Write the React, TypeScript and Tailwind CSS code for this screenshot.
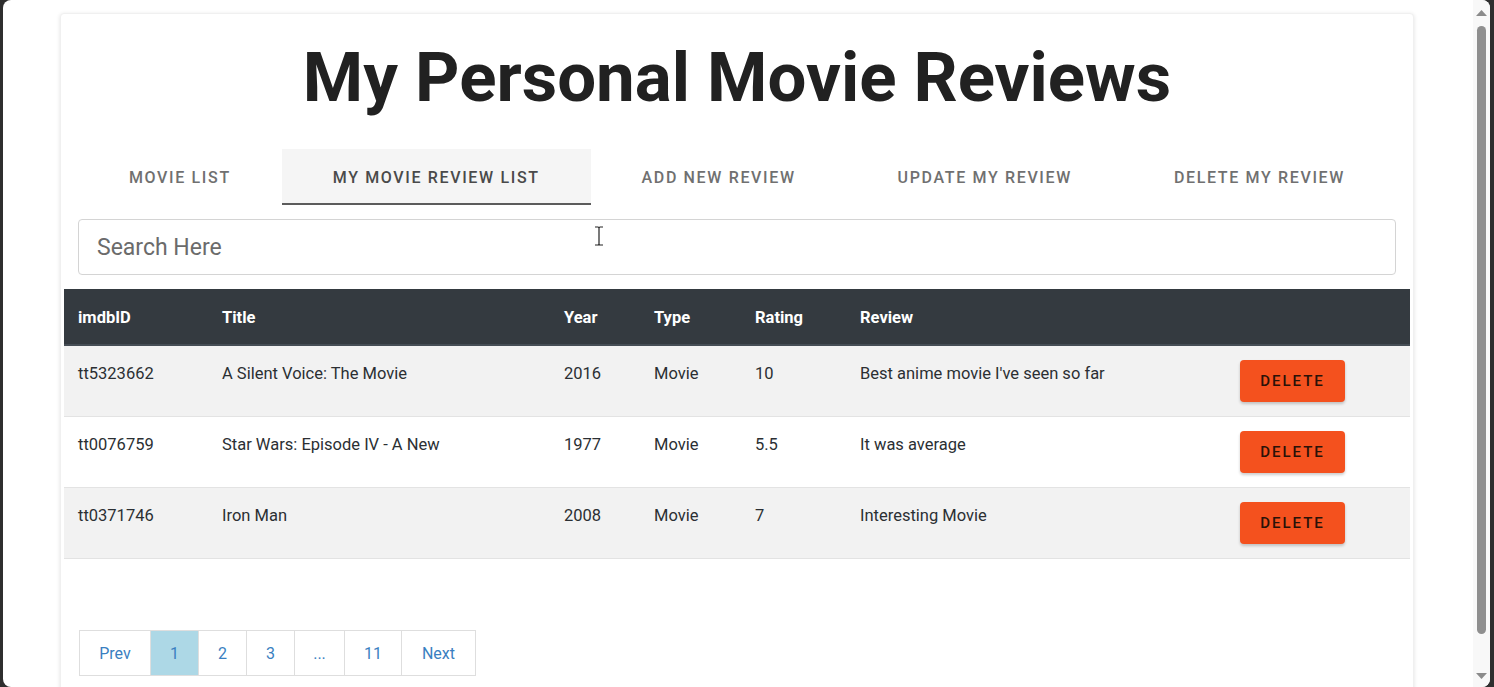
import { useState } from 'react'

const tabs = ['Movie List', 'My Movie Review List', 'Add New Review', 'Update My Review', 'Delete My Review']

const reviews = [
  { id: 'tt5323662', title: 'A Silent Voice: The Movie', year: '2016', type: 'Movie', rating: '10', review: "Best anime movie I've seen so far" },
  { id: 'tt0076759', title: 'Star Wars: Episode IV - A New', year: '1977', type: 'Movie', rating: '5.5', review: 'It was average' },
  { id: 'tt0371746', title: 'Iron Man', year: '2008', type: 'Movie', rating: '7', review: 'Interesting Movie' },
]

const pages = [
  { label: 'Prev', w: 'w-[72px]' },
  { label: '1', w: 'w-[48px]', active: true },
  { label: '2', w: 'w-[48px]' },
  { label: '3', w: 'w-[48px]' },
  { label: '...', w: 'w-[50px]' },
  { label: '11', w: 'w-[57px]' },
  { label: 'Next', w: 'w-[74px]' },
]

function Scrollbar(): React.JSX.Element {
  return (
    <div className="w-[17px] bg-[#f8f8f8] flex flex-col items-center">
      <svg width="11" height="8" viewBox="0 0 11 8" className="mt-[9px]">
        <path d="M0 7 L5.5 1 L11 7 Z" fill="#8b8b8b" />
      </svg>
      <div className="w-[9px] mt-[9px] h-[608px] rounded-full bg-[#8f8f8f]" />
      <div className="flex-1" />
      <svg width="11" height="8" viewBox="0 0 11 8" className="mb-[7px]">
        <path d="M0 1 L5.5 7 L11 1 Z" fill="#8b8b8b" />
      </svg>
    </div>
  )
}

export default function App(): React.JSX.Element {
  const [active, setActive] = useState(1)
  const [query, setQuery] = useState('')

  return (
    <div
      className="w-[1494px] h-[687px] bg-[#2e2e2e] flex overflow-hidden"
      style={{ fontFamily: 'Roboto, "Liberation Sans", sans-serif' }}
    >
      <div className="flex-1 ml-[3px] mr-[4px] bg-white rounded-[8px] flex overflow-hidden">
        <div className="flex-1 relative overflow-hidden">
          <div className="ml-[57px] mt-[13px] w-[1354px] h-[720px] bg-white rounded-[4px] shadow-[0_1px_4px_rgba(0,0,0,0.12)] border border-[#f0f0f0] px-[3px]">
            <h1 className="text-center text-[69px] leading-[80px] font-bold text-[#212121] pt-[24px] pb-[31px]">
              My Personal Movie Reviews
            </h1>

            <div className="px-[14px]">
              <div className="flex">
                {tabs.map((t, i) => (
                  <button
                    key={t}
                    type="button"
                    onClick={() => setActive(i)}
                    className={
                      i === active
                        ? 'flex-auto h-[56px] px-4 pt-[4px] uppercase text-[16px] font-medium tracking-[1.65px] text-[#4a4a4a] bg-[#f5f5f5] border-b-2 border-[#5c5c5c]'
                        : 'flex-auto h-[56px] px-4 pt-[4px] uppercase text-[16px] font-medium tracking-[1.65px] text-[#707070] border-b-2 border-transparent'
                    }
                  >
                    {t}
                  </button>
                ))}
              </div>

              <input
                value={query}
                onChange={(e) => setQuery(e.target.value)}
                placeholder="Search Here"
                className="mt-[14px] w-full h-[56px] rounded-[4px] border border-[#d4d4d4] px-[18px] text-[23px] text-[#333] placeholder:text-[#6b6b6b] outline-none"
              />
            </div>

            <table className="mt-[14px] w-full table-fixed border-collapse text-[16.5px] text-[#2b2f33]">
              <colgroup>
                <col className="w-[158px]" />
                <col className="w-[342px]" />
                <col className="w-[90px]" />
                <col className="w-[101px]" />
                <col className="w-[105px]" />
                <col className="w-[380px]" />
                <col />
              </colgroup>
              <thead>
                <tr className="h-[56px] bg-[#343a40] text-white border-b-2 border-[#454d55]">
                  <th className="pl-[14px] pt-[3px] text-left font-bold">imdbID</th>
                  <th className="pt-[3px] text-left font-bold">Title</th>
                  <th className="pt-[3px] text-left font-bold">Year</th>
                  <th className="pt-[3px] text-left font-bold">Type</th>
                  <th className="pt-[3px] text-left font-bold">Rating</th>
                  <th className="pt-[3px] text-left font-bold">Review</th>
                  <th />
                </tr>
              </thead>
              <tbody>
                {reviews.map((r, i) => (
                  <tr key={r.id} className={i % 2 === 0 ? 'h-[71px] bg-[#f2f2f2] border-b border-[#e3e3e3]' : 'h-[71px] bg-white border-b border-[#e3e3e3]'}>
                    <td className="pl-[14px] pt-[16px] align-top">{r.id}</td>
                    <td className="pt-[16px] align-top">{r.title}</td>
                    <td className="pt-[16px] align-top">{r.year}</td>
                    <td className="pt-[16px] align-top">{r.type}</td>
                    <td className="pt-[16px] align-top">{r.rating}</td>
                    <td className="pt-[16px] align-top">{r.review}</td>
                    <td className="align-middle">
                      <button
                        type="button"
                        className="w-[105px] h-[42px] rounded-[4px] bg-[#f4511e] text-[#2a1208] text-[15px] font-medium tracking-[2px] pt-[1px] shadow-[0_2px_3px_rgba(0,0,0,0.2)]"
                      >
                        DELETE
                      </button>
                    </td>
                  </tr>
                ))}
              </tbody>
            </table>

            <div className="mt-[71px] ml-[15px] flex">
              {pages.map((p, i) => (
                <div
                  key={p.label}
                  className={
                    (p.active ? 'bg-[#add8e6] ' : 'bg-white ') +
                    p.w +
                    (i === 0 ? ' border ' : ' border border-l-0 ') +
                    'h-[46px] pt-[2px] border-[#dedede] flex items-center justify-center text-[16px] text-[#3a7fc1]'
                  }
                >
                  {p.label}
                </div>
              ))}
            </div>
          </div>

          <svg width="10" height="20" viewBox="0 0 10 20" className="absolute left-[591px] top-[226px]">
            <path d="M1 1 H4 Q5 1 5 2 V18 Q5 19 4 19 H1 M9 1 H6 Q5 1 5 2 M9 19 H6 Q5 19 5 18" fill="none" stroke="#222" strokeWidth="1.2" />
          </svg>
        </div>
        <Scrollbar />
      </div>
    </div>
  )
}
